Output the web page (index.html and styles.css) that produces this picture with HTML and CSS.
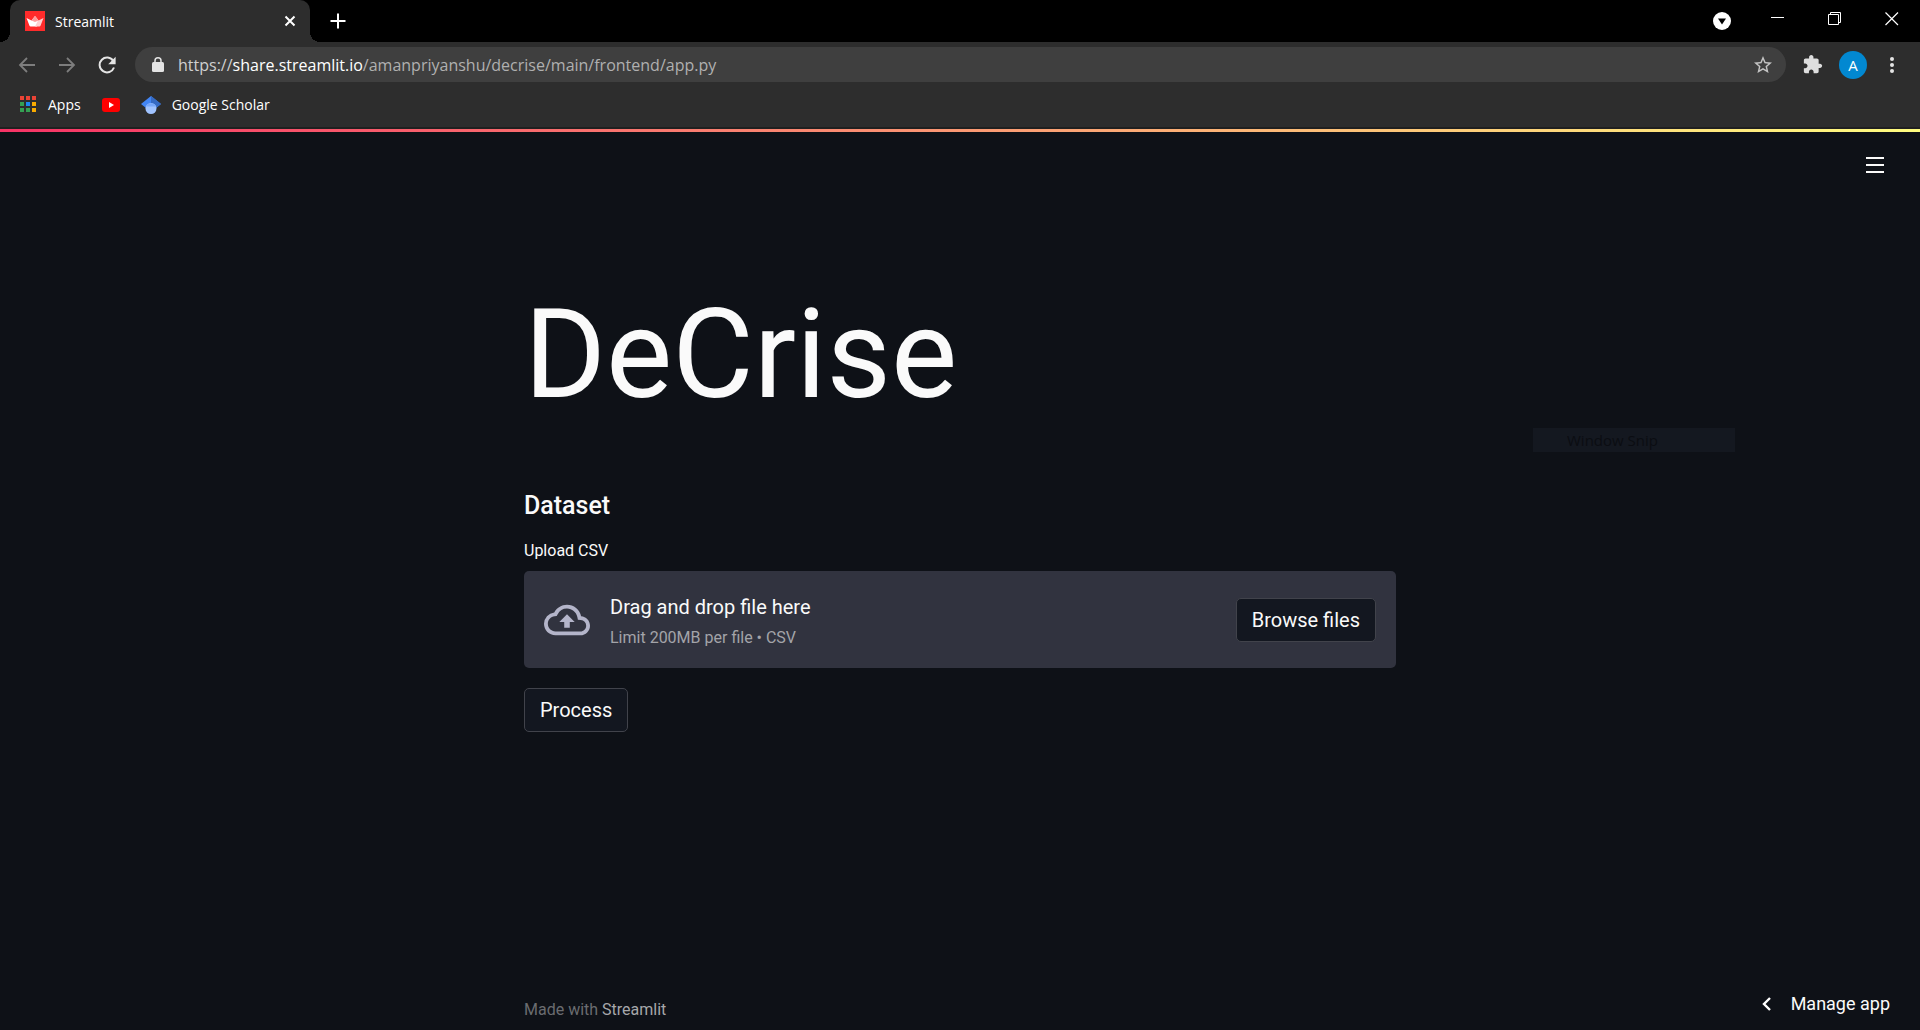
FILE: index.html
```html
<!DOCTYPE html>
<html lang="en">
<head>
<meta charset="utf-8">
<title>Streamlit</title>
<link rel="stylesheet" href="styles.css">
</head>
<body>

<header class="browser">
  <div class="tabs">
    <div class="tab">
      <svg class="favicon" width="20" height="20" viewBox="0 0 20 20">
        <path fill="#ff2b2b" d="M0 0h20v20H0z"/>
        <path fill="#fff" d="M1.500 7l5 2.500L10 5l3.500 4.500-1.500 6H5.500q-.7 0-1-.8z"/>
        <path fill="#ffd0d0" d="M10 5l3.500 4.500L18.500 7l-3 7.700q-.3.8-1 .8H10l3-6z"/>
        <path fill="#ff9c9c" d="M10 5L6.500 9.500 10 11l3.500-1.500z"/>
      </svg>
      <span class="tab-title">Streamlit</span>
      <button class="icon" aria-label="Close tab">
        <svg width="12" height="12" viewBox="0 0 12 12"><path d="M1.500 1.500l9 9M10.500 1.500l-9 9" stroke="#fff" stroke-width="2"/></svg>
      </button>
    </div>
    <button class="icon new-tab" aria-label="New tab">
      <svg width="16" height="16" viewBox="0 0 16 16"><path d="M8 0.500v15M0.500 8h15" stroke="#fff" stroke-width="2"/></svg>
    </button>
    <div class="window-buttons">
      <button class="icon tab-search" aria-label="Search tabs">
        <svg width="18" height="18" viewBox="0 0 18 18"><circle cx="9" cy="9" r="9" fill="#fff"/><path d="M5 6.500h8L9 12.500z"/></svg>
      </button>
      <button class="icon" aria-label="Minimize">
        <svg width="14" height="14" viewBox="0 0 14 14"><path d="M0 5.500h13" stroke="#fff"/></svg>
      </button>
      <button class="icon" aria-label="Restore">
        <svg width="14" height="14" viewBox="0 0 14 14"><path d="M.5 2.500h10v10H.5zM2.500 2.500v-2h10v10h-2" fill="none" stroke="#fff"/></svg>
      </button>
      <button class="icon" aria-label="Close">
        <svg width="14" height="14" viewBox="0 0 14 14"><path d="M.5.5l12.500 12.500M13 .5L.5 13" stroke="#fff" stroke-width="1.200"/></svg>
      </button>
    </div>
  </div>

  <div class="toolbar">
    <button class="icon" aria-label="Back">
      <svg width="18" height="18" viewBox="0 0 18 18"><path d="M17 9H2M9 2L2 9l7 7" fill="none" stroke="#7d7d7d" stroke-width="1.800"/></svg>
    </button>
    <button class="icon" aria-label="Forward">
      <svg width="18" height="18" viewBox="0 0 18 18"><path d="M1 9h15M9 2l7 7-7 7" fill="none" stroke="#7d7d7d" stroke-width="1.800"/></svg>
    </button>
    <button class="icon" aria-label="Reload">
      <svg width="18" height="18" viewBox="0 0 18 18"><path d="M15.300 5A7.400 7.400 0 1 0 16 11.500" fill="none" stroke="#e4e4e4" stroke-width="2"/><path d="M17.600.8v7.400h-7.400z" fill="#e4e4e4"/></svg>
    </button>
    <div class="omnibox">
      <svg width="12" height="15" viewBox="0 0 12 15"><rect y="5" width="12" height="10" rx="1.500" fill="#e4e4e4"/><path d="M3 6V3.800a3 3 0 0 1 6 0V6" fill="none" stroke="#e4e4e4" stroke-width="1.500"/></svg>
      <span class="url"><span class="scheme">https://</span><span class="host">share.streamlit.io</span>/amanpriyanshu/decrise/main/frontend/app.py</span>
      <button class="icon" aria-label="Bookmark this page">
        <svg width="18" height="18" viewBox="2 2 20 20"><path fill="#c4c4c4" d="M22 9.240l-7.190-.62L12 2 9.190 8.630 2 9.240l5.460 4.730L5.820 21 12 17.270 18.180 21l-1.630-7.030L22 9.240zM12 15.400l-3.760 2.270 1-4.280-3.320-2.880 4.380-.38L12 6.100l1.710 4.040 4.380.38-3.320 2.880 1 4.280L12 15.400z"/></svg>
      </button>
    </div>
    <div class="toolbar-right">
      <button class="icon" aria-label="Extensions">
        <svg width="20" height="20" viewBox="1 1 23 23"><path fill="#dedede" d="M20.500 11H19V7c0-1.100-.9-2-2-2h-4V3.500C13 2.120 11.880 1 10.500 1S8 2.120 8 3.500V5H4c-1.100 0-1.990.9-1.990 2v3.800H3.500c1.490 0 2.700 1.210 2.700 2.700s-1.210 2.700-2.700 2.700H2V20c0 1.100.9 2 2 2h3.800v-1.500c0-1.490 1.210-2.700 2.700-2.700s2.700 1.210 2.700 2.700V22H17c1.100 0 2-.9 2-2v-4h1.500c1.380 0 2.500-1.120 2.500-2.500S21.880 11 20.500 11z"/></svg>
      </button>
      <button class="avatar">A</button>
      <button class="icon" aria-label="Menu">
        <svg width="4" height="18" viewBox="0 0 4 18"><g fill="#e4e4e4"><circle cx="2" cy="3" r="2"/><circle cx="2" cy="9" r="2"/><circle cx="2" cy="15" r="2"/></g></svg>
      </button>
    </div>
  </div>

  <nav class="bookmarks">
    <a href="#">
      <svg width="17" height="17" viewBox="0 0 17 17">
        <path fill="#ea4335" d="M0 0h4v4H0zM6 0h4v4H6zM12 0h4v4h-4z"/>
        <path fill="#34a053" d="M0 6h4v4H0zM0 12h4v4H0zM6 12h4v4H6z"/>
        <path fill="#1a86f0" d="M6 6h4v4H6z"/>
        <path fill="#f9ab00" d="M12 6h4v4h-4zM12 12h4v4h-4z"/>
      </svg>
      Apps
    </a>
    <a href="#" aria-label="YouTube">
      <svg width="18" height="14" viewBox="0 0 18 14"><rect width="18" height="14" rx="3" fill="#f00"/><path fill="#fff" d="M7 4l5 3-5 3z"/></svg>
    </a>
    <a href="#">
      <svg width="20" height="20" viewBox="0 0 20 20"><path fill="#4285f4" d="M10 1L0 9l5 4h10l5-4z"/><path fill="#356ac3" d="M10 1l10 8-5 4-5-4z"/><circle cx="10" cy="13.500" r="5.500" fill="#a0c3ff"/><path fill="#76a7fa" d="M4.900 11.500a5.600 5.600 0 0 1 10.200 0z"/></svg>
      Google Scholar
    </a>
  </nav>
</header>

<div class="app">
  <div class="decoration"></div>
  <button class="icon main-menu" aria-label="Main menu">
    <svg width="18" height="16" viewBox="0 0 18 16"><path fill="#fafafa" d="M0 0h18v2H0zM0 7h18v2H0zM0 14h18v2H0z"/></svg>
  </button>

  <main class="block-container">
    <h1>DeCrise</h1>
    <h2>Dataset</h2>
    <label class="upload-label" for="csv-browse">Upload CSV</label>
    <section class="dropzone">
      <svg width="46" height="32" viewBox="0 4 24 16"><path fill="#b4b5ca" d="M19.350 10.040A7.490 7.490 0 0 0 12 4C9.110 4 6.600 5.640 5.350 8.040A5.994 5.994 0 0 0 0 14c0 3.310 2.690 6 6 6h13c2.760 0 5-2.240 5-5 0-2.640-2.050-4.780-4.650-4.960zM19 18H6c-2.210 0-4-1.790-4-4 0-2.050 1.530-3.760 3.560-3.970l1.070-.11.5-.95A5.469 5.469 0 0 1 12 6c2.620 0 4.880 1.860 5.390 4.430l.3 1.500 1.530.11A2.980 2.980 0 0 1 22 15c0 1.650-1.350 3-3 3zM8 13h2.550v3h2.900v-3H16l-4-4z"/></svg>
      <div class="instructions">
        <span>Drag and drop file here</span>
        <small>Limit 200MB per file • CSV</small>
      </div>
      <button class="btn" id="csv-browse">Browse files</button>
    </section>
    <button class="btn">Process</button>
  </main>

  <footer>Made with <a href="#">Streamlit</a></footer>

  <button class="manage">
    <svg width="9" height="14" viewBox="0 0 9 14"><path d="M8 1L2 7l6 6" fill="none" stroke="#fff" stroke-width="2.400"/></svg>
    Manage app
  </button>
  <div class="snip-tip">Window Snip</div>
</div>

</body>
</html>
```
FILE: styles.css
```css
* { box-sizing: border-box; }

body {
  margin: 0;
  min-height: 100vh;
  display: flex;
  flex-direction: column;
  background: #0e1117;
  color: #fafafa;
  font-family: Roboto, "Liberation Sans", sans-serif;
  font-size: 20px;
}

button { font: inherit; color: inherit; cursor: pointer; }
a { color: inherit; text-decoration: none; }
svg { display: block; flex: none; }

.icon {
  display: flex;
  padding: 0;
  border: 0;
  background: none;
}

/* browser frame */
.browser {
  background: #2d2d2d;
  border-bottom: 2px solid #202020;
  color: #fff;
  font-family: "Open Sans", "Noto Sans", sans-serif;
  font-size: 14px;
}

.tabs {
  display: flex;
  height: 42px;
  padding-left: 10px;
  background: #000;
}
.tab {
  position: relative;
  display: flex;
  align-items: center;
  width: 300px;
  padding: 0 14px 0 15px;
  background: #2d2d2d;
  border-radius: 10px 10px 0 0;
}
.tab::before,
.tab::after {
  content: "";
  position: absolute;
  bottom: 0;
  width: 10px;
  height: 10px;
}
.tab::before {
  right: 100%;
  background: radial-gradient(circle at 0 0, #000 10px, #2d2d2d 10px);
}
.tab::after {
  left: 100%;
  background: radial-gradient(circle at 100% 0, #000 10px, #2d2d2d 10px);
}
.tab-title { flex: 1; padding-left: 10px; }
.new-tab { margin-left: 20px; align-items: center; }
.window-buttons {
  display: flex;
  align-items: center;
  gap: 43px;
  margin-left: auto;
  padding: 0 21px 4px 0;
}
.tab-search { margin: 4px -3px 0 0; }

.toolbar {
  display: flex;
  align-items: center;
  height: 45px;
  padding-left: 18px;
  gap: 22px;
}
.omnibox {
  flex: 1;
  display: flex;
  align-items: center;
  height: 35px;
  margin: 0 -5px 0 -3px;
  padding: 0 14px 0 17px;
  border-radius: 18px;
  background: #3f3f3f;
}
.url {
  flex: 1;
  padding-left: 14px;
  font-size: 16px;
  color: #b0b0b0;
}
.scheme { color: #d0d0d0; }
.host { color: #fff; }
.toolbar-right {
  display: flex;
  align-items: center;
  gap: 16px;
  padding-right: 26px;
}
.toolbar-right .icon:last-child { margin-left: 7px; }
.avatar {
  width: 28px;
  height: 28px;
  padding: 0;
  border: 0;
  border-radius: 50%;
  background: #0288d1;
  font-size: 15px;
}

.bookmarks {
  display: flex;
  align-items: center;
  gap: 21px;
  height: 40px;
  padding: 0 20px 5px;
}
.bookmarks a {
  display: flex;
  align-items: center;
  gap: 11px;
}

/* streamlit page */
.app {
  position: relative;
  flex: 1;
  display: flex;
  flex-direction: column;
}
.decoration {
  height: 3px;
  background: linear-gradient(90deg, #f63366, #fffd80);
}
.main-menu {
  position: absolute;
  top: 28px;
  right: 36px;
}

.block-container {
  flex: 1;
  width: 100%;
  max-width: 872px;
  margin: 0 auto;
  padding-top: 148px;
}
h1 {
  margin: 0;
  font-size: 125px;
  line-height: 150px;
  font-weight: 400;
}
h2 {
  margin: 61px 0 18px;
  font-size: 25px;
  line-height: 30px;
  font-weight: 500;
}
.upload-label {
  display: block;
  margin-bottom: 8px;
  font-size: 16px;
  line-height: 24px;
}

.dropzone {
  display: flex;
  align-items: center;
  gap: 20px;
  margin-bottom: 20px;
  padding: 20px;
  border-radius: 5px;
  background: #31333f;
}
.instructions {
  flex: 1;
  display: flex;
  flex-direction: column;
  gap: 9px;
  padding-top: 4px;
  line-height: 24px;
}
small {
  font-size: 16px;
  line-height: 20px;
  color: #a3a4a9;
}
.btn {
  height: 44px;
  padding: 0 15px;
  border: 1px solid #41434b;
  border-radius: 5px;
  background: #131720;
}

footer {
  width: 100%;
  max-width: 872px;
  margin: 0 auto;
  padding-bottom: 8px;
  font-size: 16px;
  line-height: 24px;
  color: #6a6c70;
}
footer a { color: #a6a7aa; }

.manage {
  position: absolute;
  right: 30px;
  bottom: 14px;
  display: flex;
  align-items: center;
  gap: 20px;
  padding: 0;
  border: 0;
  background: none;
  font-size: 18px;
  line-height: 24px;
}

.snip-tip {
  position: absolute;
  top: 299px;
  right: 185px;
  width: 202px;
  padding-left: 34px;
  background: #141820;
  color: #0b0d12;
  font-family: "Open Sans", sans-serif;
  font-size: 15px;
  line-height: 24px;
}
```
